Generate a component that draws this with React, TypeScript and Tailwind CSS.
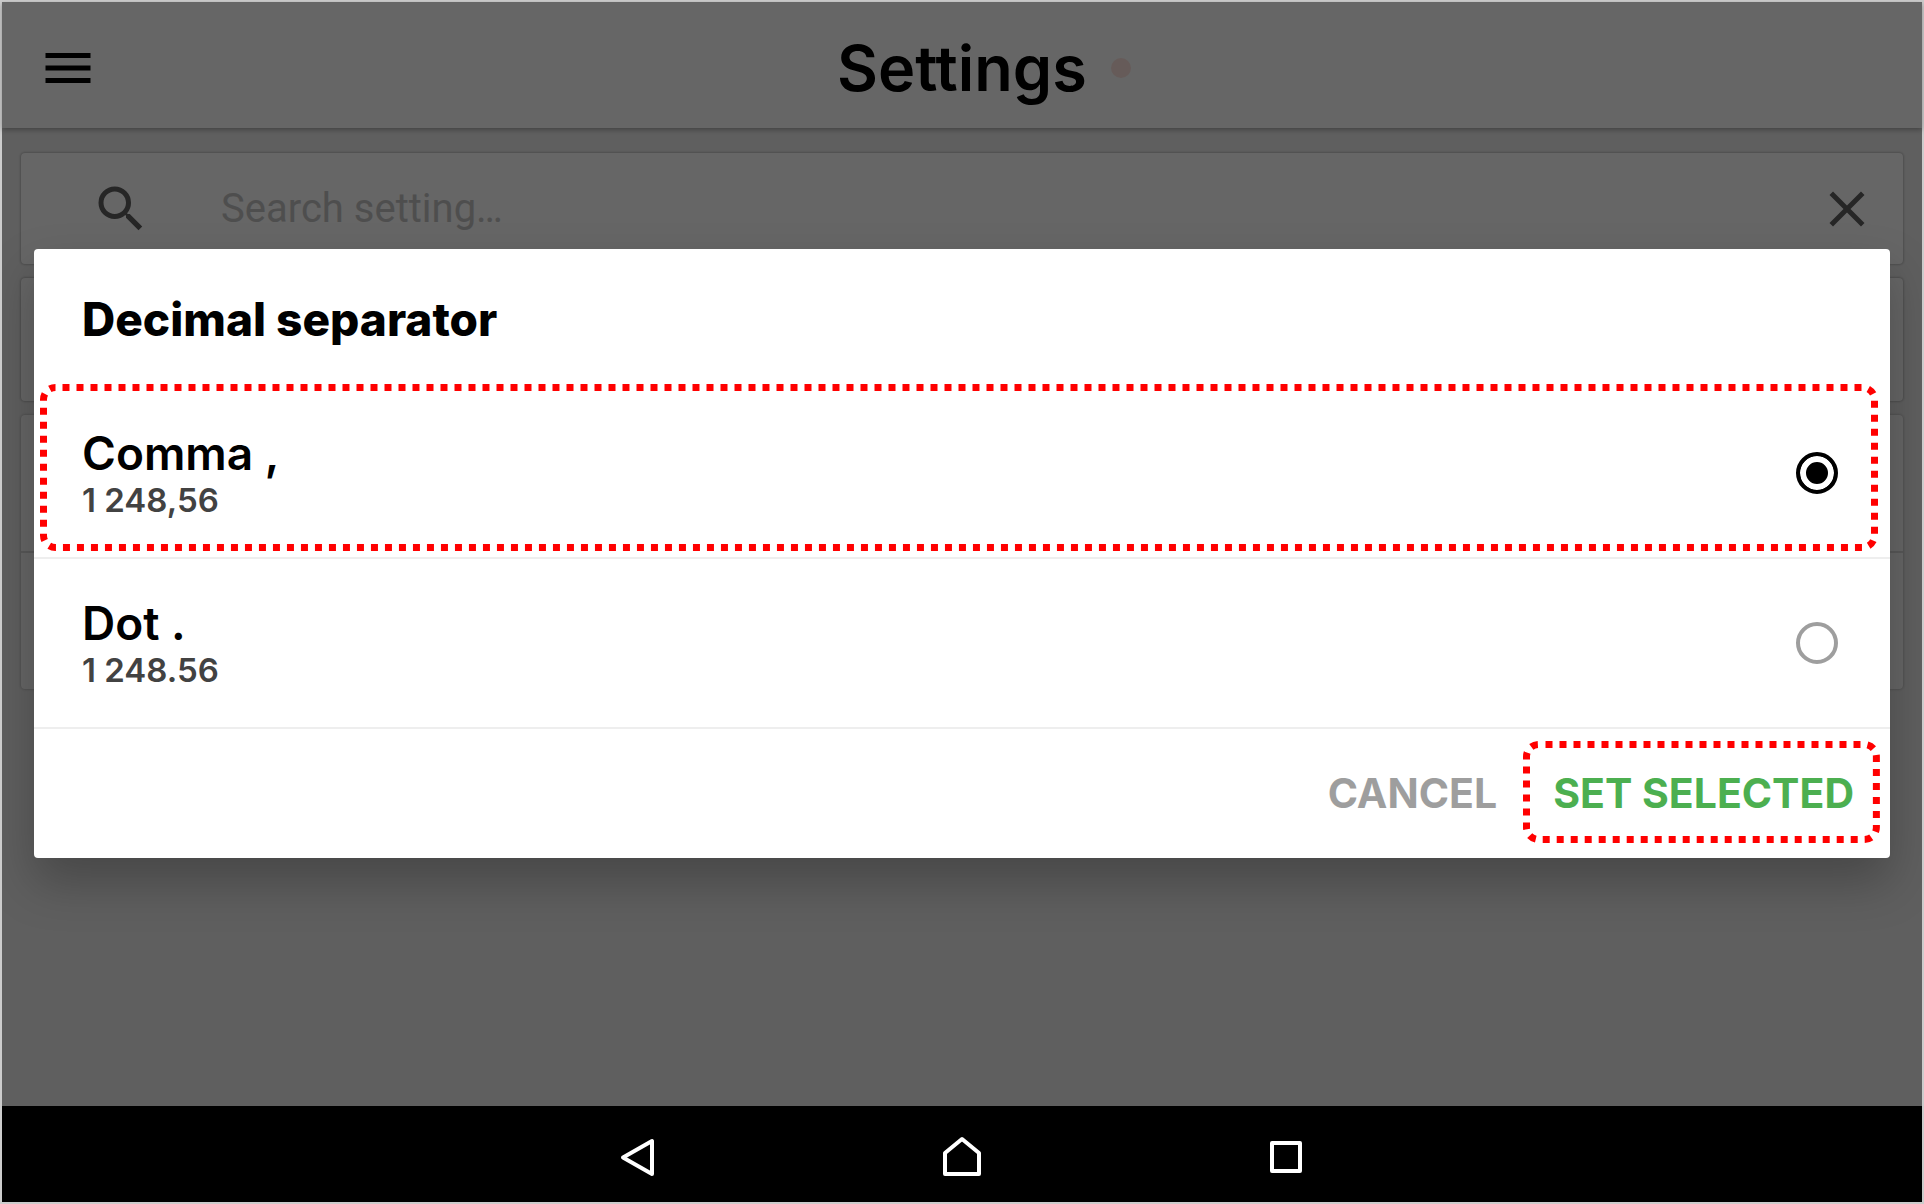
import { useState } from "react";
import { MdClose, MdMenu, MdSearch } from "react-icons/md";

const options = [
  { value: "comma", label: "Comma ,", sample: "1 248,56" },
  { value: "dot", label: "Dot .", sample: "1 248.56" },
];

function DottedOutline({ className }: { className: string }) {
  return (
    <div className={`pointer-events-none absolute ${className}`}>
      <svg className="block h-full w-full" aria-hidden="true">
        <rect
          x="3.5"
          y="3.5"
          rx="12"
          className="h-[calc(100%-7px)] w-[calc(100%-7px)]"
          fill="none"
          stroke="#ff0000"
          strokeWidth="7"
          strokeDasharray="7 7"
          strokeDashoffset="7"
        />
      </svg>
    </div>
  );
}

function Header() {
  return (
    <header className="relative z-10 grid h-[126px] grid-cols-[1fr_auto_1fr] items-center bg-white px-9 pt-1.5 shadow-[0_2px_5px_rgba(0,0,0,0.3)]">
      <button type="button" aria-label="Menu" className="justify-self-start">
        <MdMenu size={60} />
      </button>
      <h1 className="relative text-[63px] leading-none font-semibold">
        Settings
        <span className="absolute top-1/2 left-full ml-6 size-5 -translate-y-1/2 rounded-full bg-[#ffe4df]" />
      </h1>
    </header>
  );
}

function SettingsPage() {
  return (
    <main className="flex grow flex-col gap-3.5 px-[19px] pt-[25px]">
      <label className="flex h-[111px] items-center rounded border-0 bg-white pr-[26px] pl-[70px] shadow-[0_0_3px_rgba(0,0,0,0.4)]">
        <MdSearch size={60} className="text-[#5f5f5f]" />
        <input
          type="text"
          aria-label="Search setting"
          placeholder="Search setting…"
          className="ml-[70px] min-w-0 grow bg-transparent font-[Roboto,sans-serif] text-[40px] leading-none outline-none placeholder:text-[#c4c4c4]"
        />
        <button type="button" aria-label="Clear search" className="text-[#5f5f5f]">
          <MdClose size={60} />
        </button>
      </label>
      <section className="h-[123px] rounded bg-white shadow-[0_0_3px_rgba(0,0,0,0.4)]" />
      <section className="rounded bg-white shadow-[0_0_3px_rgba(0,0,0,0.3)]">
        <div className="h-[138px] border-b-2 border-[#dddddd]" />
        <div className="h-[136px]" />
      </section>
    </main>
  );
}

function SeparatorDialog() {
  const [selected, setSelected] = useState("comma");
  return (
    <div
      role="dialog"
      aria-modal="true"
      aria-labelledby="dialog-title"
      className="w-full rounded bg-white shadow-[0_24px_48px_rgba(0,0,0,0.25)]"
    >
      <h2 id="dialog-title" className="flex h-[140px] items-center px-12 text-[46px] leading-none font-extrabold">
        Decimal separator
      </h2>
      {options.map((option) => (
        <label
          key={option.value}
          className="relative flex h-[170px] items-center justify-between border-b-2 border-[#eeeeee] pr-[52px] pl-12"
        >
          <span className="flex flex-col">
            <span className="text-[46px] leading-[54px] font-semibold">{option.label}</span>
            <span className="text-[33px] leading-[40px] font-semibold text-[#424242]">{option.sample}</span>
          </span>
          <input
            type="radio"
            name="separator"
            value={option.value}
            checked={selected === option.value}
            onChange={() => setSelected(option.value)}
            className="size-[42px] appearance-none rounded-full border-4 border-[#9e9e9e] bg-white checked:border-black checked:bg-black checked:shadow-[inset_0_0_0_6px_white]"
          />
          {option.value === "comma" && <DottedOutline className="-top-[5px] right-3 bottom-1.5 left-1.5" />}
        </label>
      ))}
      <div className="flex h-[129px] items-center justify-end gap-14 pr-9 text-[41px] leading-none font-bold">
        <button type="button" className="text-[#9e9e9e]">
          CANCEL
        </button>
        <button type="button" className="relative text-[#4caf50]">
          SET SELECTED
          <DottedOutline className="-top-8 -right-[26px] -bottom-[29px] -left-[30px]" />
        </button>
      </div>
    </div>
  );
}

function NavigationBar() {
  return (
    <nav className="flex h-24 items-center justify-center gap-[264px] bg-black pt-1.5 text-white">
      <button type="button" aria-label="Back">
        <svg width="60" height="60" viewBox="0 0 60 60" fill="none" stroke="currentColor" strokeWidth="4" strokeLinejoin="round">
          <path d="M44 14 V47 L15 30.500 Z" />
        </svg>
      </button>
      <button type="button" aria-label="Home">
        <svg width="60" height="60" viewBox="0 0 60 60" fill="none" stroke="currentColor" strokeWidth="4" strokeLinejoin="round">
          <path d="M13 26 L30 12 L47 26 V47 H13 Z" />
        </svg>
      </button>
      <button type="button" aria-label="Recent apps">
        <svg width="60" height="60" viewBox="0 0 60 60" fill="none" stroke="currentColor" strokeWidth="4" strokeLinejoin="round">
          <path d="M16 16 H44 V44 H16 Z" />
        </svg>
      </button>
    </nav>
  );
}

export default function App() {
  return (
    <div className="flex min-h-screen flex-col border-2 border-[#cccccc] font-[Inter,sans-serif] text-black">
      <div className="relative flex grow flex-col bg-[#eeeeee]">
        <Header />
        <SettingsPage />
        <div className="absolute inset-0 z-20 flex items-center overflow-hidden bg-black/60 px-8 pb-px">
          <SeparatorDialog />
        </div>
      </div>
      <NavigationBar />
    </div>
  );
}
